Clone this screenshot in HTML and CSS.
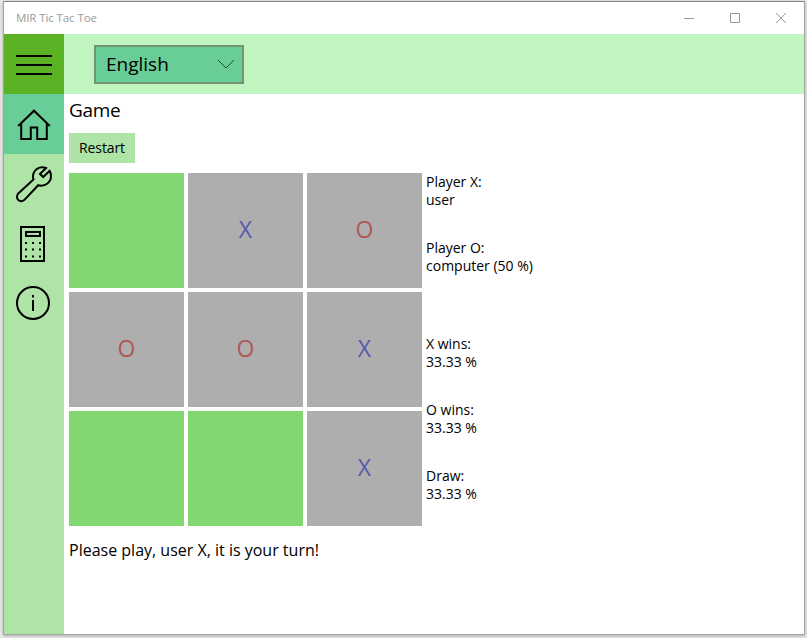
FILE: index.html
```
<!DOCTYPE html>
<html lang="en">
<head>
    <meta charset="UTF-8">
    <meta name="viewport" content="width=device-width, initial-scale=1.0">
    <title>MIR Tic Tac Toe</title>
    <link rel="stylesheet" href="styles.css">
</head>
<body>
    <div class="window">
        <div class="titlebar">
            <span class="titlebar-text">MIR Tic Tac Toe</span>
            <div class="titlebar-buttons">
                <svg width="46" height="32" viewBox="0 0 46 32"><path d="M18 16.5h10"/></svg>
                <svg width="46" height="32" viewBox="0 0 46 32"><path d="M18.500 11.500h9v9h-9z"/></svg>
                <svg width="46" height="32" viewBox="0 0 46 32"><path d="M18 11l10 10M28 11l-10 10"/></svg>
            </div>
        </div>

        <div class="topbar">
            <button class="menu-btn" aria-label="Menu">
                <span></span>
                <span></span>
                <span></span>
            </button>
            <div class="language">
                <span class="language-name">English</span>
                <svg width="18" height="10" viewBox="0 0 18 10"><path d="M1 1l8 8 8-8"/></svg>
            </div>
        </div>

        <div class="main">
            <nav class="sidebar">
                <!-- Home -->
                <a class="nav-item active">
                    <svg width="60" height="60" viewBox="0 0 60 60"><path d="M14.200 32L30 16.700 45.800 32M17.200 29.500V45H26.800V33.500H33.200V45H42.800V29.500"/></svg>
                </a>
                <!-- Settings -->
                <a class="nav-item">
                    <svg width="60" height="60" viewBox="0 0 60 60"><path d="M42 14C35.500 11.300 29 16 29 22.500C29 23.600 29.200 24.500 29.500 25.500L14.500 39.300C12.500 41.300 12.500 44.300 14.300 46C16.100 47.700 19 47.600 20.700 45.700L34.200 31.200C41 33 47 28.500 47 22C47 20.200 46.500 18.300 45.600 16.800L39.200 23L36 20Z"/></svg>
                </a>
                <!-- Calculator -->
                <a class="nav-item">
                    <svg width="60" height="60" viewBox="0 0 60 60">
                        <path d="M17 13h23v34H17zM22 18h14v4H22z"/>
                        <path class="keys" d="M21 29h16M21 35.500h16M21 42.500h16"/>
                    </svg>
                </a>
                <!-- About -->
                <a class="nav-item">
                    <svg width="60" height="60" viewBox="0 0 60 60"><circle cx="29" cy="29" r="16"/><path d="M29 26v11M29 21v2.500"/></svg>
                </a>
            </nav>

            <div class="content">
                <h1 class="title">Game</h1>
                <button class="restart-btn">Restart</button>

                <div class="game">
                    <div class="board">
                        <div class="cell free"></div>
                        <div class="cell x">X</div>
                        <div class="cell o">O</div>
                        <div class="cell o">O</div>
                        <div class="cell o">O</div>
                        <div class="cell x">X</div>
                        <div class="cell free"></div>
                        <div class="cell free"></div>
                        <div class="cell x">X</div>
                    </div>

                    <div class="info">
                        <div class="players">
                            <p>Player X:<br>user</p>
                            <p>Player O:<br>computer (50 %)</p>
                        </div>
                        <div class="stats">
                            <p>X wins:<br>33.33 %</p>
                            <p>O wins:<br>33.33 %</p>
                            <p>Draw:<br>33.33 %</p>
                        </div>
                    </div>
                </div>

                <p class="message">Please play, user X, it is your turn!</p>
            </div>
        </div>
    </div>
</body>
</html>
```

FILE: styles.css
```
* {
    margin: 0;
    padding: 0;
    box-sizing: border-box;
}

body {
    font-family: 'Segoe UI', 'Open Sans', 'Noto Sans', sans-serif;
    background: #ededed;
    color: #000;
    height: 638px;
    padding: 1px 2px 3px 3px;
    overflow: hidden;
}

svg {
    display: block;
    fill: none;
    stroke: #000;
}

.window {
    display: flex;
    flex-direction: column;
    height: 634px;
    background: #fff;
    border: 1px solid #a3a3a3;
    border-top-color: #848484;
    box-shadow: 0 1px 4px rgba(0,0,0,0.3);
}

.titlebar {
    display: flex;
    justify-content: space-between;
    height: 32px;
    line-height: 32px;
    padding-left: 12px;
}

.titlebar-text {
    font-size: 11.5px;
    letter-spacing: -0.1px;
    color: #999;
}

.titlebar-buttons {
    display: flex;
}

.titlebar-buttons svg {
    stroke: #999;
}

.topbar {
    display: flex;
    align-items: center;
    height: 60px;
    background: #c0f5c0;
}

.menu-btn {
    display: flex;
    flex-direction: column;
    align-items: center;
    justify-content: center;
    gap: 7px;
    width: 60px;
    height: 60px;
    padding-top: 2px;
    border: none;
    background: #5ab224;
}

.menu-btn span {
    width: 36px;
    height: 2px;
    background: #000;
}

.language {
    display: flex;
    align-items: center;
    justify-content: space-between;
    width: 150px;
    height: 39px;
    margin-left: 30px;
    padding: 0 7px 0 10px;
    border: 2px solid #739373;
    background: #68cd96;
}

.language-name {
    font-size: 19px;
}

.language svg {
    stroke: #244734;
}

.main {
    display: flex;
    flex: 1;
}

.sidebar {
    width: 60px;
    background: #aee4a5;
}

.nav-item {
    display: block;
    height: 60px;
}

.nav-item.active {
    background: #68cd96;
}

.nav-item svg {
    stroke-width: 2;
}

.nav-item .keys {
    stroke-dasharray: 2 5;
}

.content {
    padding: 2px 5px;
}

.title {
    font-size: 19px;
    font-weight: normal;
    letter-spacing: -0.3px;
    line-height: 29px;
}

.restart-btn {
    display: block;
    width: 66px;
    height: 30px;
    margin-top: 8px;
    padding-bottom: 1px;
    border: none;
    background: #aee4a5;
    font-family: inherit;
    font-size: 14px;
    letter-spacing: -0.1px;
}

.game {
    display: flex;
    gap: 4px;
    margin-top: 10px;
}

.board {
    display: grid;
    grid-template-columns: repeat(3, 115px);
    grid-template-rows: repeat(3, 115px);
    gap: 4px;
}

.cell {
    background: #aeaeae;
    font-size: 23px;
    line-height: 112px;
    text-align: center;
}

.cell.free {
    background: #82d773;
}

.cell.x {
    color: #5858ae;
}

.cell.o {
    color: #ae5858;
}

.info {
    height: 353px;
    font-size: 14px;
    line-height: 18px;
}

.info p {
    margin-bottom: 30px;
}

.stats {
    margin-top: 60px;
}

.message {
    margin-top: 12px;
    font-size: 16px;
    line-height: 24px;
}
```
